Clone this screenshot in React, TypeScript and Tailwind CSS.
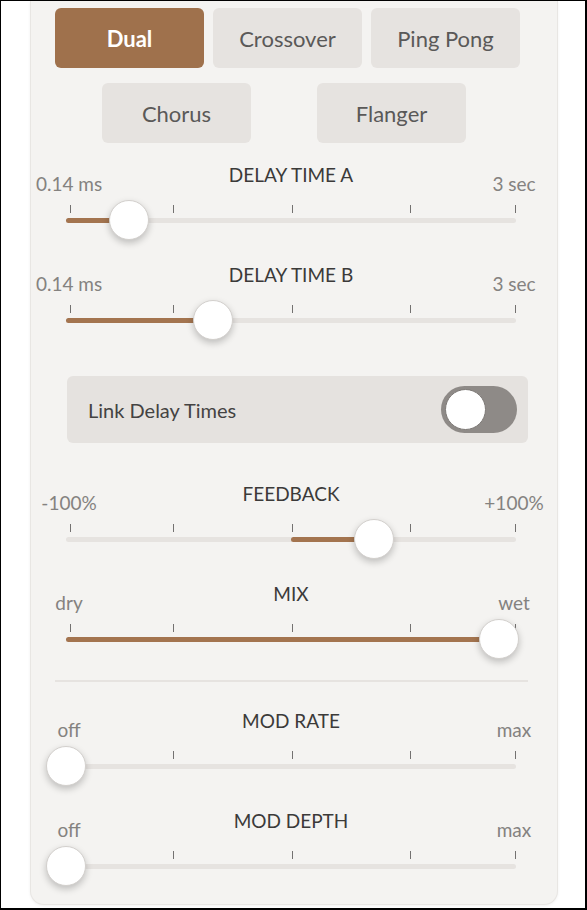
import React from 'react';

type SliderProps = {
  title: string;
  min: string;
  max: string;
  value: number; // 0..1
  bipolar?: boolean;
};

const TRACK_W = 450;
const ticks = ['left-[4px]', 'left-[107px]', 'left-[226px]', 'left-[344px]', 'left-[449px]'];

function Slider({ title, min, max, value, bipolar }: SliderProps) {
  const pos = value * TRACK_W;
  const fillLeft = bipolar ? Math.min(pos, TRACK_W / 2) : 0;
  const fillWidth = bipolar ? Math.abs(pos - TRACK_W / 2) : pos;

  return (
    <div className="ml-[35px] w-[450px] h-[100px]">
      {/* Labels + title */}
      <div className="flex h-[45px]">
        <div className="w-0 flex justify-center">
          <span className="relative left-[3px] mt-[12px] whitespace-nowrap text-[19px] leading-[23px] text-[#848280]">{min}</span>
        </div>
        <div className="flex-1 text-center">
          <span className="inline-block mt-[3px] text-[19px] leading-[23px] text-[#3b3a39]">{title}</span>
        </div>
        <div className="w-0 flex justify-center">
          <span className="relative right-[2px] mt-[12px] whitespace-nowrap text-[19px] leading-[23px] text-[#848280]">{max}</span>
        </div>
      </div>

      {/* Ticks */}
      <div className="relative h-[8px]">
        {ticks.map((t) => (
          <div key={t} className={`absolute top-0 h-[8px] w-px bg-[#737170] ${t}`} />
        ))}
      </div>

      {/* Track */}
      <div className="relative mt-[5px] h-[5px] rounded-full bg-[#e6e3e0]">
        <div
          className="absolute top-0 h-[5px] rounded-full bg-[#a3744f]"
          style={{ left: fillLeft, width: fillWidth }}
        />
        <div
          className="absolute top-[-18px] h-[40px] w-[40px] -ml-[20px] rounded-full border border-[#d3d0cd] bg-white shadow-[0_3px_7px_rgba(0,0,0,0.22)]"
          style={{ left: pos }}
        />
      </div>
    </div>
  );
}

function ModeButton({ label, active }: { label: string; active?: boolean }) {
  return (
    <button
      className={
        active
          ? 'h-[60px] w-[149px] rounded-[6px] bg-[#9f714c] text-[22px] font-bold text-white'
          : 'h-[60px] w-[149px] rounded-[6px] bg-[#e6e3e0] text-[22px] text-[#5a5958]'
      }
    >
      {label}
    </button>
  );
}

export default function App() {
  return (
    <div className="h-[910px] w-[587px] overflow-hidden bg-white border-t border-l border-r-2 border-b-2 border-black font-['Lato','Noto_Sans',sans-serif]">
      <div className="ml-[29px] h-[904px] w-[528px] rounded-b-[14px] border-x border-b border-[#e8e6e3] bg-[#f4f3f1] shadow-[0_1px_3px_rgba(0,0,0,0.06)]">
        {/* Modes */}
        <div className="flex gap-[9px] pl-[24px] pt-[7px]">
          <ModeButton label="Dual" active />
          <ModeButton label="Crossover" />
          <ModeButton label="Ping Pong" />
        </div>
        <div className="mt-[15px] flex gap-[66px] pl-[71px]">
          <ModeButton label="Chorus" />
          <ModeButton label="Flanger" />
        </div>

        <div className="mt-[17px]">
          <Slider title="DELAY TIME A" min="0.14 ms" max="3 sec" value={0.14} />
          <Slider title="DELAY TIME B" min="0.14 ms" max="3 sec" value={0.327} />
        </div>

        {/* Link toggle */}
        <div className="ml-[36px] mt-[16px] flex h-[67px] w-[461px] items-center justify-between rounded-[6px] bg-[#e5e2df] pl-[21px] pr-[11px]">
          <span className="text-[20px] text-[#444342]">Link Delay Times</span>
          <div className="flex h-[47px] w-[76px] items-center rounded-full bg-[#8e8a87] px-[4px]">
            <div className="h-[41px] w-[41px] rounded-full border border-[#7d7976] bg-white" />
          </div>
        </div>

        <div className="mt-[36px]">
          <Slider title="FEEDBACK" min="-100%" max="+100%" value={0.684} bipolar />
          <Slider title="MIX" min="dry" max="wet" value={0.962} />
        </div>

        <div className="ml-[24px] mt-[1px] h-[2px] w-[473px] bg-[#e6e3e0]" />

        <div className="mt-[24px]">
          <Slider title="MOD RATE" min="off" max="max" value={0} />
          <Slider title="MOD DEPTH" min="off" max="max" value={0} />
        </div>
      </div>
    </div>
  );
}
